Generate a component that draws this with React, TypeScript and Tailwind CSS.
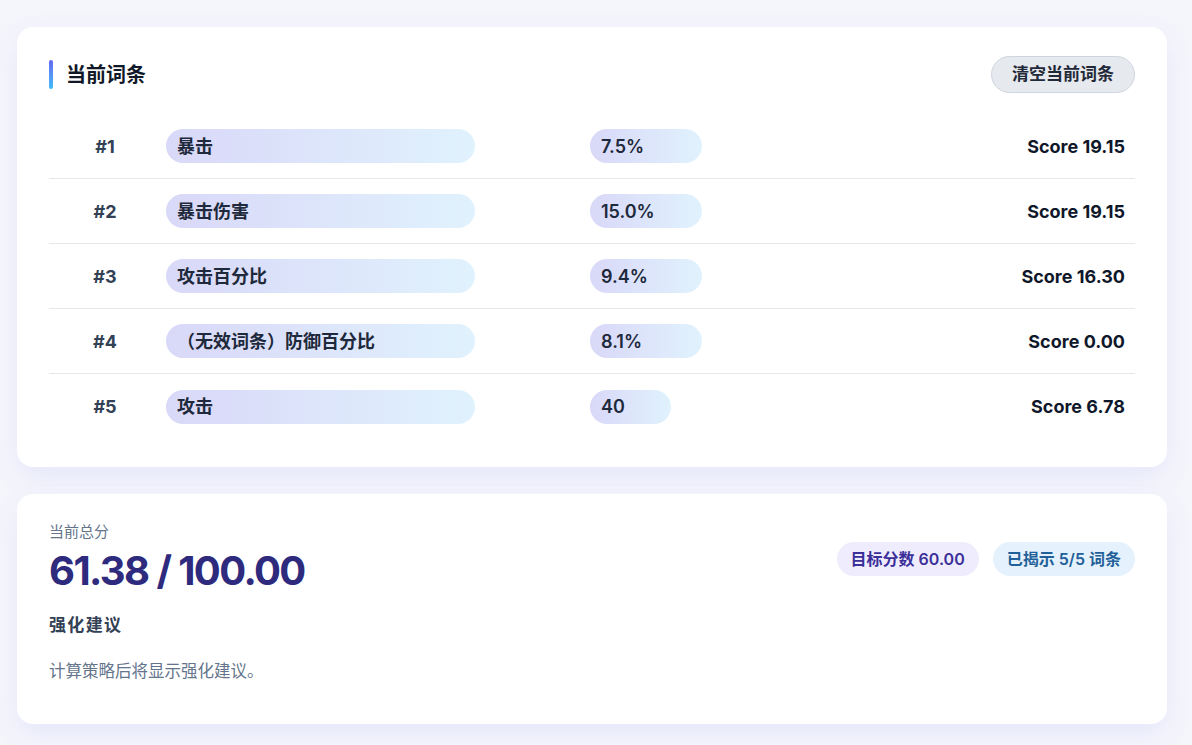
import React from "react";

type Entry = {
  rank: number;
  name: string;
  value: string;
  valueWidth: number;
  score: string;
};

const entries: Entry[] = [
  { rank: 1, name: "暴击", value: "7.5%", valueWidth: 112, score: "19.15" },
  { rank: 2, name: "暴击伤害", value: "15.0%", valueWidth: 112, score: "19.15" },
  { rank: 3, name: "攻击百分比", value: "9.4%", valueWidth: 112, score: "16.30" },
  { rank: 4, name: "（无效词条）防御百分比", value: "8.1%", valueWidth: 112, score: "0.00" },
  { rank: 5, name: "攻击", value: "40", valueWidth: 81, score: "6.78" },
];

function EntryRow({ entry, last }: { entry: Entry; last: boolean }) {
  return (
    <div
      className={
        "grid grid-cols-[117px_424px_1fr_auto] items-center h-[65px] " +
        (last ? "" : "border-b border-[#e6e8ee]")
      }
    >
      <div className="w-[112px] text-center text-[18px] font-bold text-[#334155]">
        #{entry.rank}
      </div>
      <div className="w-[309px] h-[34px] rounded-full bg-gradient-to-r from-[#d9d8f8] to-[#e0f2fd] flex items-center px-[11px] text-[18px] font-semibold text-[#1e293b]">
        {entry.name}
      </div>
      <div>
        <div
          className="h-[34px] rounded-full bg-gradient-to-r from-[#d9d8f8] to-[#e0f2fd] flex items-center px-[11px] text-[18px] font-semibold text-[#1e293b]"
          style={{ width: entry.valueWidth }}
        >
          {entry.value}
        </div>
      </div>
      <div className="pr-[10px] text-[18px] font-bold text-[#0f172a]">
        Score {entry.score}
      </div>
    </div>
  );
}

export default function App() {
  return (
    <div
      className="min-h-screen bg-[#f5f6fb] pl-[17px] pr-[25px] pt-[27px] pb-[22px] flex flex-col gap-[27px]"
      style={{ fontFamily: 'Inter, "Noto Sans CJK SC", sans-serif' }}
    >
      {/* current entries */}
      <section className="bg-white rounded-[16px] shadow-[0_10px_28px_rgba(99,102,241,0.10)] px-8 pt-[29px] pb-[28px]">
        <header className="flex items-center justify-between">
          <div className="flex items-center gap-[13px]">
            <div className="w-[4px] h-[29px] rounded-full bg-gradient-to-b from-[#6366f1] to-[#38bdf8]" />
            <h2 className="text-[20px] font-bold text-[#111827]">当前词条</h2>
          </div>
          <button className="h-[37px] px-[20px] rounded-full bg-[#e6e9ee] border border-[#cfd5de] text-[17px] font-semibold text-[#1f2937]">
            清空当前词条
          </button>
        </header>

        <div className="mt-[21px]">
          {entries.map((e, i) => (
            <EntryRow key={e.rank} entry={e} last={i === entries.length - 1} />
          ))}
        </div>
      </section>

      {/* total score */}
      <section className="bg-white rounded-[16px] shadow-[0_10px_28px_rgba(99,102,241,0.10)] px-8 pt-[28px] pb-[41px]">
        <div className="flex items-center justify-between">
          <div>
            <div className="text-[15px] leading-[20px] text-[#64748b]">当前总分</div>
            <div className="mt-[5px] text-[40px] leading-[48px] font-bold tracking-[-0.04em] text-[#2e2a7d]">
              61.38 / 100.00
            </div>
          </div>
          <div className="flex items-center gap-[14px]">
            <span className="h-[34px] px-[14px] rounded-full bg-[#efedfd] flex items-center text-[16px] font-semibold text-[#3b2f9a]">
              目标分数 60.00
            </span>
            <span className="h-[34px] px-[14px] rounded-full bg-[#e5f2fd] flex items-center text-[16px] font-semibold text-[#22609a]">
              已揭示 5/5 词条
            </span>
          </div>
        </div>

        <h3 className="mt-[18px] text-[17px] leading-[24px] font-semibold tracking-[0.08em] text-[#334155]">
          强化建议
        </h3>
        <p className="mt-[22px] text-[16.5px] leading-[24px] text-[#64748b]">
          计算策略后将显示强化建议。
        </p>
      </section>
    </div>
  );
}
